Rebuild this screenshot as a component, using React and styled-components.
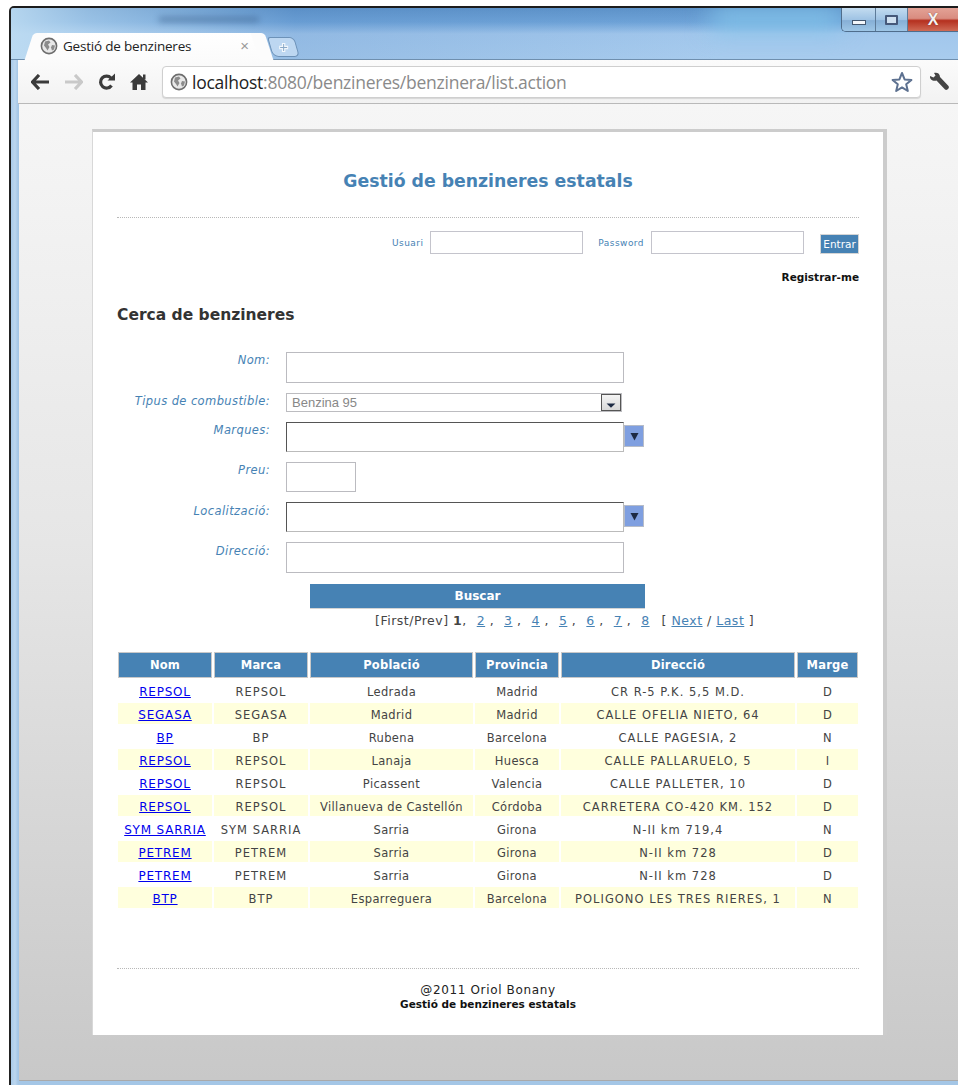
import styled, { createGlobalStyle } from 'styled-components';

const GlobalStyle = createGlobalStyle`
  html, body {
    margin: 0;
    padding: 0;
    background: #ffffff;
  }
`;

const rows = [
  ['REPSOL', 'REPSOL', 'Ledrada', 'Madrid', 'CR R-5 P.K. 5,5 M.D.', 'D'],
  ['SEGASA', 'SEGASA', 'Madrid', 'Madrid', 'CALLE OFELIA NIETO, 64', 'D'],
  ['BP', 'BP', 'Rubena', 'Barcelona', 'CALLE PAGESIA, 2', 'N'],
  ['REPSOL', 'REPSOL', 'Lanaja', 'Huesca', 'CALLE PALLARUELO, 5', 'I'],
  ['REPSOL', 'REPSOL', 'Picassent', 'Valencia', 'CALLE PALLETER, 10', 'D'],
  ['REPSOL', 'REPSOL', 'Villanueva de Castellón', 'Córdoba', 'CARRETERA CO-420 KM. 152', 'D'],
  ['SYM SARRIA', 'SYM SARRIA', 'Sarria', 'Girona', 'N-II km 719,4', 'N'],
  ['PETREM', 'PETREM', 'Sarria', 'Girona', 'N-II km 728', 'D'],
  ['PETREM', 'PETREM', 'Sarria', 'Girona', 'N-II km 728', 'D'],
  ['BTP', 'BTP', 'Esparreguera', 'Barcelona', 'POLIGONO LES TRES RIERES, 1', 'N'],
];

const headers = ['Nom', 'Marca', 'Població', 'Provincia', 'Direcció', 'Marge'];
const colWidths = [94, 94, 163, 84, 234, 61];
const pages = ['2', '3', '4', '5', '6', '7', '8'];
// Marca and Direcció hold mostly capitals, which run wider
const capsColumns = [1, 4];

const Screen = styled.div`
  width: 958px;
  height: 1085px;
  padding: 6px 0 0 9px;
  box-sizing: border-box;
  overflow: hidden;
`;

const Window = styled.div`
  height: 1079px;
  display: flex;
  flex-direction: column;
  border-top: 2px solid #1c1c1c;
  border-left: 2px solid #222;
  border-top-left-radius: 5px;
  background: linear-gradient(90deg, #a9cbea 0, #bcd6ee 4px, #a4c6e6 7px);
  overflow: hidden;
`;

const Frame = styled.div`
  position: relative;
  height: 52px;
  flex: none;
  background:
    linear-gradient(90deg, rgba(190, 220, 242, 0.9) 0, rgba(190, 220, 242, 0.55) 8%, rgba(80, 130, 190, 0.2) 30%, rgba(70, 125, 190, 0) 75%),
    linear-gradient(180deg, #5e93c9 0, #6ea3d8 14px, #a2c7ec 26px, #a8ccee 100%);
  border-bottom: 1px solid #6f8fae;
  box-sizing: border-box;
`;

const AeroGlow = styled.div`
  position: absolute;
  top: 0;
  left: 700px;
  width: 130px;
  height: 22px;
  background: #83c4ea;
  filter: blur(12px);
`;

const BlurredTitle = styled.div`
  position: absolute;
  top: 9px;
  left: 148px;
  width: 100px;
  height: 5px;
  background: #3b5f8a;
  opacity: 0.55;
  filter: blur(3px);
`;

const Caption = styled.div`
  position: absolute;
  top: 0;
  right: 0;
  display: flex;
  height: 23px;
  border: 1px solid #4f6d8c;
  border-top: none;
  border-right: none;
  border-bottom-left-radius: 5px;
  overflow: hidden;
`;

const CaptionButton = styled.div`
  width: ${(p) => p.$w}px;
  box-sizing: border-box;
  display: flex;
  align-items: center;
  justify-content: center;
  border-right: ${(p) => (p.$close ? 'none' : '1px solid #5d7b99')};
  background: ${(p) =>
    p.$close
      ? 'linear-gradient(180deg, #e3a296 0, #d98c80 45%, #b5301f 55%, #cf6a55 100%)'
      : 'linear-gradient(180deg, #c3dcf0 0, #9fc3e4 50%, #86afd6 55%, #9ec6e6 100%)'};
`;

const MinGlyph = styled.div`
  width: 12px;
  height: 3px;
  margin-top: 6px;
  background: #f4f7fb;
  border: 1px solid #44576f;
`;

const MaxGlyph = styled.div`
  width: 9px;
  height: 6px;
  border: 2px solid #46597a;
  background: #cfe0f0;
  border-radius: 1px;
`;

const CloseGlyph = styled.span`
  font: bold 16px 'Liberation Sans', sans-serif;
  color: #f7f2f0;
  text-shadow: 0 0 1px #5a2a22;
`;

const TabStrip = styled.div`
  position: absolute;
  left: 19px;
  bottom: -1px;
  display: flex;
  align-items: flex-end;
`;

const Tab = styled.div`
  position: relative;
  width: 228px;
  height: 27px;
  margin: 0 5px;
  display: flex;
  align-items: center;
  gap: 5px;
  padding: 0 14px 2px 5px;
  box-sizing: border-box;
  background: linear-gradient(180deg, #ffffff 0, #fbfbfb 100%);
  border-radius: 4px 4px 0 0;
  font: 13.5px 'Open Sans', 'Liberation Sans', sans-serif;
  color: #222;

  &::before,
  &::after {
    content: '';
    position: absolute;
    top: 0;
    bottom: 0;
    width: 14px;
    background: #fcfcfc;
  }
  &::before {
    left: -6px;
    transform: skewX(-18deg);
    border-radius: 4px 0 0 0;
  }
  &::after {
    right: -6px;
    transform: skewX(18deg);
    border-radius: 0 4px 0 0;
  }
`;

const TabLabel = styled.span`
  position: relative;
  z-index: 1;
  flex: 1;
  letter-spacing: -0.2px;
`;

const TabClose = styled.span`
  position: relative;
  z-index: 1;
  color: #9a9a9a;
  font: 15px 'Liberation Sans', sans-serif;
`;

const NewTab = styled.div`
  width: 27px;
  height: 20px;
  margin: 0 0 3px 2px;
  display: flex;
  align-items: center;
  justify-content: center;
  background: #bdd7f1;
  border: 1px solid #6d92b8;
  border-radius: 3px 5px 5px 6px;
  transform: skewX(16deg);
  box-sizing: border-box;
`;

const Toolbar = styled.div`
  height: 44px;
  flex: none;
  margin-left: 7px;
  display: flex;
  align-items: center;
  background: linear-gradient(180deg, #fbfbfb 0, #f2f2f2 100%);
  border-bottom: 1px solid #b9b9b9;
  box-sizing: border-box;
`;

const NavButtons = styled.div`
  width: 144px;
  flex: none;
  display: flex;
  align-items: center;
  padding: 1px 0 0 13px;
  box-sizing: border-box;
  gap: 14px;
`;

const AddressBar = styled.div`
  width: 759px;
  height: 32px;
  flex: none;
  display: flex;
  align-items: center;
  gap: 4px;
  padding: 0 7px;
  box-sizing: border-box;
  background: #fff;
  border: 1px solid #cfcfcf;
  border-radius: 4px;
  box-shadow: 0 1px 1px rgba(0, 0, 0, 0.12);
  font: 17.5px 'Open Sans', 'Liberation Sans', sans-serif;
  color: #8a8a8a;
`;

const Url = styled.span`
  flex: 1;
  letter-spacing: -0.25px;

  b {
    font-weight: 400;
    color: #222;
  }
`;

const WrenchSlot = styled.div`
  flex: 1;
  display: flex;
  justify-content: center;
`;

const Viewport = styled.div`
  flex: 1;
  margin-left: 8px;
  margin-bottom: 6px;
  padding: 25px 0 0 73px;
  background: linear-gradient(180deg, #f6f6f6 0, #e6e6e6 45%, #c8c8c8 100%);
  border-bottom: 1px solid #a9a9a9;
`;

const Card = styled.div`
  width: 795px;
  height: 906px;
  box-sizing: border-box;
  background: #fff;
  border-top: 3px solid #cccccc;
  border-left: 1px solid #d8d8d8;
  border-right: 4px solid #cccccc;
  padding: 0 24px;
  display: flex;
  flex-direction: column;
  font-family: 'DejaVu Sans', Verdana, sans-serif;
`;

const Title = styled.h1`
  margin: 38px 0 0;
  height: 47px;
  font-size: 17.3px;
  line-height: 22px;
  font-weight: 700;
  text-align: center;
  color: #4682b4;
  border-bottom: 1px dotted #b8b8b8;
`;

const LoginRow = styled.div`
  display: flex;
  justify-content: flex-end;
  align-items: center;
  margin-top: 13px;
  height: 23px;
`;

const LoginLabel = styled.label`
  font-size: 9px;
  letter-spacing: 0.45px;
  color: #4682b4;
  margin: 0 7px 0 15px;
`;

const LoginInput = styled.input`
  width: 153px;
  height: 23px;
  box-sizing: border-box;
  border: 1px solid #c4c4cc;
  background: #fff;
  padding: 0;
`;

const EnterButton = styled.button`
  width: 39px;
  height: 20px;
  margin: 3px 0 0 16px;
  padding: 0;
  border: 1px solid #d5d5d5;
  background: #4682b4;
  color: #fff;
  font: 10.5px 'DejaVu Sans', sans-serif;
`;

const Register = styled.a`
  align-self: flex-end;
  margin-top: 16px;
  font-size: 10.5px;
  font-weight: 700;
  line-height: 14px;
  color: #111;
`;

const SectionTitle = styled.h2`
  margin: 21px 0 0;
  font-size: 15.5px;
  line-height: 20px;
  font-weight: 700;
  color: #333;
`;

const SearchForm = styled.form`
  display: flex;
  flex-direction: column;
  gap: 10px;
  margin-top: 27px;
`;

const FormRow = styled.div`
  display: flex;
  align-items: flex-start;
`;

const FieldLabel = styled.label`
  width: 153px;
  margin-right: 16px;
  padding-top: ${(p) => p.$top ?? 0}px;
  flex: none;
  text-align: right;
  font-size: 11.5px;
  letter-spacing: 0.4px;
  line-height: 14px;
  font-style: italic;
  color: #4682b4;
  white-space: nowrap;
`;

const TextField = styled.input`
  display: block;
  width: ${(p) => p.$w ?? 338}px;
  height: ${(p) => p.$h ?? 31}px;
  box-sizing: border-box;
  border: 1px solid #bbbbc0;
  background: #fff;
  padding: 0;
`;

const SelectBox = styled.div`
  width: 336px;
  height: 19px;
  box-sizing: border-box;
  display: flex;
  align-items: center;
  justify-content: space-between;
  padding-left: 5px;
  border: 1px solid #bcbcc0;
  font: 13px 'Liberation Sans', sans-serif;
  color: #888;
`;

const SelectArrow = styled.span`
  width: 20px;
  height: 17px;
  padding-top: 5px;
  display: flex;
  align-items: center;
  justify-content: center;
  background: linear-gradient(180deg, #f4f4f4, #d8d8d8);
  border: 1px solid #555;
  box-sizing: border-box;
`;

const ComboInput = styled.input`
  width: 338px;
  height: 30px;
  box-sizing: border-box;
  border: 1px solid #bbb;
  border-top: 1px solid #555;
  border-left: 1px solid #555;
  background: #fff;
  padding: 0;
`;

const ComboArrow = styled.span`
  width: 20px;
  height: 22px;
  margin-top: 3px;
  display: flex;
  align-items: center;
  justify-content: center;
  box-sizing: border-box;
  background: #7f9fe0;
  border: 1px solid #b6bcc8;
`;

const SearchButton = styled.button`
  display: block;
  width: 335px;
  height: 25px;
  margin: 1px 0 0 193px;
  padding: 0;
  border: none;
  border-bottom: 1px solid #d4d4d4;
  background: #4682b4;
  color: #fff;
  font: bold 12px 'DejaVu Sans', sans-serif;
`;

const Pager = styled.div`
  margin: 3px 0 0 258px;
  height: 17px;
  display: flex;
  align-items: center;
  gap: 10px;
  font-size: 12.5px;
  letter-spacing: 0.5px;
  color: #444;
  white-space: nowrap;
`;

const PagerEnd = styled.span`
  margin-left: 2px;
`;

const PageLink = styled.a`
  color: #4682b4;
  text-decoration: underline;
`;

const Table = styled.table`
  margin: 21px 0 0 -1px;
  width: 744px;
  table-layout: fixed;
  border-collapse: separate;
  border-spacing: 2px;
`;

const HeadCell = styled.th`
  height: 26px;
  box-sizing: border-box;
  padding: 0;
  border: 1px solid #c8c8c8;
  background: #4682b4;
  color: #fff;
  font-size: 11.5px;
  letter-spacing: 0.2px;
  font-weight: 700;
  text-align: center;
`;

const Cell = styled.td`
  height: 21px;
  box-sizing: border-box;
  padding: 2px 0 0;
  text-align: center;
  font-size: 11.5px;
  letter-spacing: ${(p) => (p.$caps ? '1px' : '0.35px')};
  color: #444;
  white-space: nowrap;
  background: ${(p) => (p.$odd ? '#ffffdd' : '#fff')};
`;

const NameLink = styled.a`
  color: #0000ee;
  text-decoration: underline;
  font-size: 12px;
  letter-spacing: 0.8px;
`;

const Footer = styled.div`
  margin-top: 58px;
  border-top: 1px dotted #b8b8b8;
  padding-top: 14px;
  text-align: center;
  font-size: 12px;
  letter-spacing: 0.65px;
  line-height: 14px;
  color: #222;
`;

const FooterTitle = styled.div`
  font-size: 10.5px;
  letter-spacing: 0;
  font-weight: 700;
  color: #111;
`;

const Globe = () => (
  <svg width="18" height="18" viewBox="0 0 18 18" style={{ position: 'relative', zIndex: 1, flex: 'none' }}>
    <circle cx="9" cy="9" r="7.6" fill="#e8e8e8" stroke="#6e6e6e" strokeWidth="1.6" />
    <path d="M5 4.5 L9 3.5 L10.5 5.5 L8 7.5 L9.5 10 L7.5 13.5 L6 11 L4 8.5Z" fill="#8c8c8c" />
    <path d="M12 8 L15 8.5 L14 12.5 L12 13.5 L11 10.5Z" fill="#8c8c8c" />
  </svg>
);

const ArrowLeftIcon = ({ color }) => (
  <svg width="19" height="16" viewBox="0 0 19 16">
    <path d="M8 1 L1.5 8 L8 15 M2 8 H18" fill="none" stroke={color} strokeWidth="3.2" />
  </svg>
);

const ArrowRightIcon = ({ color }) => (
  <svg width="19" height="16" viewBox="0 0 19 16">
    <path d="M11 1 L17.5 8 L11 15 M17 8 H1" fill="none" stroke={color} strokeWidth="3.2" />
  </svg>
);

const ReloadIcon = () => (
  <svg width="19" height="18" viewBox="0 0 19 18">
    <path d="M14.5 12.5 A6 6 0 1 1 14 5" fill="none" stroke="#3b3b3b" strokeWidth="3.2" />
    <path d="M10.5 7.5 H18 V0.5Z" fill="#3b3b3b" />
  </svg>
);

const HomeIcon = () => (
  <svg width="18" height="18" viewBox="0 0 18 18">
    <path d="M9 1 L18 9.5 L15.5 9.5 L15.5 17 L11 17 L11 11.5 L7 11.5 L7 17 L2.5 17 L2.5 9.5 L0 9.5Z" fill="#3b3b3b" />
    <rect x="13" y="1.5" width="2.5" height="5" fill="#3b3b3b" />
  </svg>
);

const StarIcon = () => (
  <svg width="22" height="22" viewBox="0 0 22 22">
    <path d="M11 2 L13.6 8.4 L20.4 8.9 L15.2 13.3 L16.8 20 L11 16.4 L5.2 20 L6.8 13.3 L1.6 8.9 L8.4 8.4Z" fill="#fff" stroke="#5d7190" strokeWidth="2" strokeLinejoin="round" />
  </svg>
);

const WrenchIcon = () => (
  <svg width="21" height="20" viewBox="0 0 21 20">
    <path d="M1 4 L4.5 5.5 L6.5 3.5 L5 1 C8 0 11 1.5 11 5 L19.5 14 C21 16 18 19 16 17.5 L7.5 8.5 C4 9.5 0.5 7.5 1 4Z" fill="#444" />
  </svg>
);

const PlusIcon = () => (
  <svg width="11" height="11" viewBox="0 0 11 11" style={{ transform: 'skewX(-16deg)' }}>
    <path d="M5.5 1 V10 M1 5.5 H10" stroke="#f2f7fc" strokeWidth="3.4" />
    <path d="M5.5 2 V9 M2 5.5 H9" stroke="#8aa8c6" strokeWidth="1" />
  </svg>
);

const TriangleDown = ({ size = 9, height = 9 }) => (
  <svg width={size} height={height} viewBox="0 0 9 9" preserveAspectRatio="none">
    <path d="M0.5 1 H8.5 L4.5 8.5Z" fill="#1d2a44" />
  </svg>
);

const App = () => {
  return (
    <Screen>
      <GlobalStyle />
      <Window>
        <Frame>
          <AeroGlow />
          <BlurredTitle />
          <Caption>
            <CaptionButton $w={34}><MinGlyph /></CaptionButton>
            <CaptionButton $w={32}><MaxGlyph /></CaptionButton>
            <CaptionButton $w={50} $close><CloseGlyph>X</CloseGlyph></CaptionButton>
          </Caption>
          <TabStrip>
            <Tab>
              <Globe />
              <TabLabel>Gestió de benzineres</TabLabel>
              <TabClose>×</TabClose>
            </Tab>
            <NewTab><PlusIcon /></NewTab>
          </TabStrip>
        </Frame>
        <Toolbar>
          <NavButtons>
            <ArrowLeftIcon color="#3b3b3b" />
            <ArrowRightIcon color="#c9c9c9" />
            <ReloadIcon />
            <HomeIcon />
          </NavButtons>
          <AddressBar>
            <Globe />
            <Url><b>localhost</b>:8080/benzineres/benzinera/list.action</Url>
            <StarIcon />
          </AddressBar>
          <WrenchSlot><WrenchIcon /></WrenchSlot>
        </Toolbar>
        <Viewport>
          <Card>
            <Title>Gestió de benzineres estatals</Title>
            <LoginRow>
              <LoginLabel>Usuari</LoginLabel>
              <LoginInput />
              <LoginLabel>Password</LoginLabel>
              <LoginInput />
              <EnterButton>Entrar</EnterButton>
            </LoginRow>
            <Register>Registrar-me</Register>
            <SectionTitle>Cerca de benzineres</SectionTitle>
            <SearchForm>
              <FormRow>
                <FieldLabel $top={1}>Nom:</FieldLabel>
                <TextField />
              </FormRow>
              <FormRow>
                <FieldLabel $top={1}>Tipus de combustible:</FieldLabel>
                <SelectBox>
                  Benzina 95
                  <SelectArrow><TriangleDown size={10} height={5} /></SelectArrow>
                </SelectBox>
              </FormRow>
              <FormRow>
                <FieldLabel $top={1}>Marques:</FieldLabel>
                <ComboInput />
                <ComboArrow><TriangleDown /></ComboArrow>
              </FormRow>
              <FormRow>
                <FieldLabel $top={1}>Preu:</FieldLabel>
                <TextField $w={70} $h={30} />
              </FormRow>
              <FormRow>
                <FieldLabel $top={2}>Localització:</FieldLabel>
                <ComboInput />
                <ComboArrow><TriangleDown /></ComboArrow>
              </FormRow>
              <FormRow>
                <FieldLabel $top={2}>Direcció:</FieldLabel>
                <TextField />
              </FormRow>
              <SearchButton type="button">Buscar</SearchButton>
            </SearchForm>
            <Pager>
              <span>[First/Prev] <b>1</b>,</span>
              {pages.map((page, idx) => (
                <span key={page}>
                  <PageLink>{page}</PageLink>{idx < pages.length - 1 ? ' ,' : ''}
                </span>
              ))}
              <PagerEnd>[ <PageLink>Next</PageLink> / <PageLink>Last</PageLink> ]</PagerEnd>
            </Pager>
            <Table>
              <colgroup>
                {colWidths.map((w, idx) => <col key={idx} width={w} />)}
              </colgroup>
              <thead>
                <tr>
                  {headers.map((h) => <HeadCell key={h}>{h}</HeadCell>)}
                </tr>
              </thead>
              <tbody>
                {rows.map((row, idx) => (
                  <tr key={idx}>
                    {row.map((value, col) => (
                      <Cell key={col} $odd={idx % 2 === 1} $caps={capsColumns.includes(col)}>
                        {col === 0 ? <NameLink>{value}</NameLink> : value}
                      </Cell>
                    ))}
                  </tr>
                ))}
              </tbody>
            </Table>
            <Footer>
              @2011 Oriol Bonany
              <FooterTitle>Gestió de benzineres estatals</FooterTitle>
            </Footer>
          </Card>
        </Viewport>
      </Window>
    </Screen>
  );
};

export default App;
